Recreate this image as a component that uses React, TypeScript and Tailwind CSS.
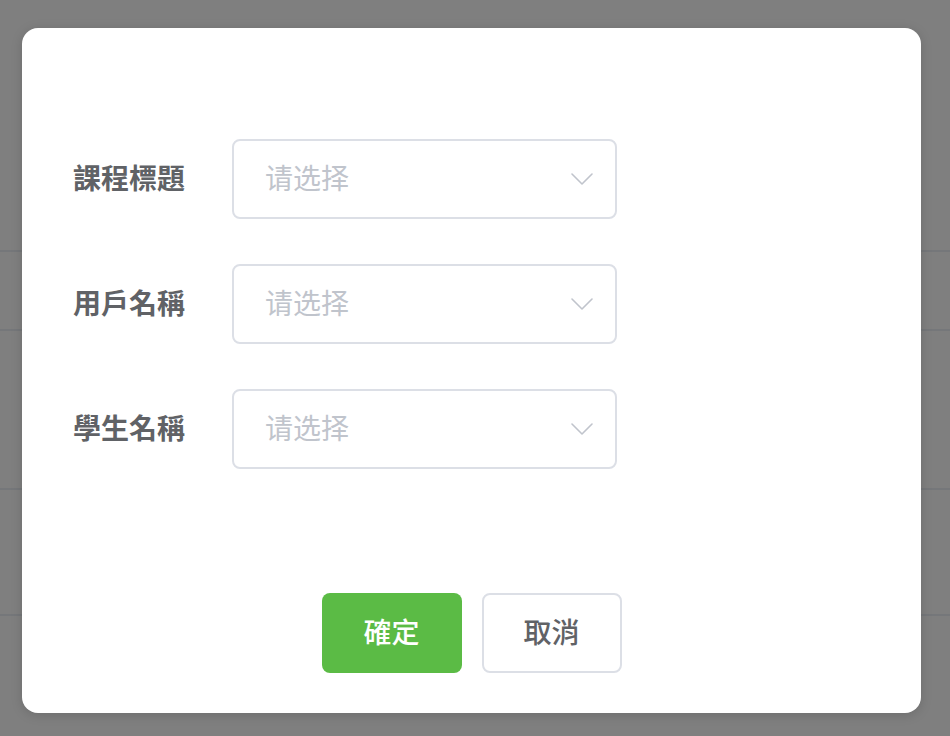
import React from 'react';

const fields = ['課程標題', '用戶名稱', '學生名稱'];

function Chevron() {
  return (
    <svg width="22" height="12" viewBox="0 0 22 12" fill="none">
      <path d="M1 1 L11 11 L21 1" stroke="#c0c4cc" strokeWidth="1.6" strokeLinecap="round" strokeLinejoin="round" />
    </svg>
  );
}

function SelectBox() {
  return (
    <div className="flex h-[80px] w-[385px] items-center justify-between rounded-[8px] border-2 border-[#dcdfe6] bg-white pl-[31px] pr-[22px]">
      <span className="pb-[5px] text-[28px] leading-none text-[#c0c4cc] font-['Noto_Sans_CJK_SC',sans-serif]">请选择</span>
      <Chevron />
    </div>
  );
}

export default function App() {
  return (
    <div className="relative h-[736px] w-[950px] overflow-hidden bg-white font-['Noto_Sans_CJK_TC',sans-serif]">
      {/* table rows behind the dialog */}
      <div className="flex flex-col pt-[250px]">
        <div className="h-[2px] bg-[#ebeef5]" />
        <div className="h-[77px]" />
        <div className="h-[2px] bg-[#ebeef5]" />
        <div className="h-[157px]" />
        <div className="h-[2px] bg-[#ebeef5]" />
        <div className="h-[124px]" />
        <div className="h-[2px] bg-[#ebeef5]" />
      </div>

      <div className="absolute inset-0 bg-black/50" />

      <div className="absolute left-[22px] top-[28px] flex h-[685px] w-[899px] flex-col rounded-[16px] bg-white shadow-[0_2px_12px_rgba(0,0,0,0.15)]">
        <div className="flex flex-col gap-[45px] pl-[51px] pt-[111px]">
          {fields.map((f) => (
            <div key={f} className="flex items-center">
              <span className="w-[159px] pb-[5px] text-[28px] leading-none font-bold text-[#606266]">{f}</span>
              <SelectBox />
            </div>
          ))}
        </div>
        <div className="mt-auto flex justify-center gap-[20px] pb-[40px]">
          <button className="h-[80px] w-[140px] rounded-[8px] bg-[#5bbb45] pb-[5px] text-[28px] leading-none font-medium text-white">確定</button>
          <button className="h-[80px] w-[140px] rounded-[8px] border-2 border-[#dcdfe6] bg-white pb-[5px] text-[28px] leading-none font-medium text-[#606266]">取消</button>
        </div>
      </div>
    </div>
  );
}
